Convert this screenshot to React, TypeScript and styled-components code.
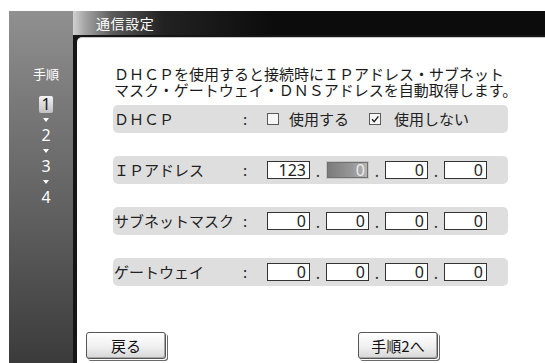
import React from 'react'
import styled, { createGlobalStyle } from 'styled-components'

const GlobalStyle = createGlobalStyle`
  html, body {
    margin: 0;
    padding: 0;
    background: #ffffff;
  }
  body {
    font-family: "Noto Sans CJK JP", "Noto Sans", sans-serif;
  }
`

const StyledScreen = styled.div`
  box-sizing: border-box;
  display: flex;
  height: 363px;
  padding: 11px 0 0 9px;
  overflow: hidden;
`

const StyledSidebar = styled.div`
  box-sizing: border-box;
  flex: 0 0 64px;
  display: flex;
  flex-direction: column;
  align-items: center;
  padding: 55px 0 0 10px;
  background: linear-gradient(#909090, #767676 30%, #5e5e5e 60%, #3b3b3b);
  color: #ffffff;
`

const StyledStepHead = styled.div`
  font-size: 13px;
  line-height: 16px;
  margin-bottom: 14px;
`

const StyledStepNum = styled.div<{ $active?: boolean }>`
  font-family: "Noto Sans", sans-serif;
  font-size: 16px;
  line-height: 17px;
  min-width: 14px;
  text-align: center;
  border-radius: 2px;
  color: ${(p) => (p.$active ? '#1a1a1a' : '#ffffff')};
  background: ${(p) =>
    p.$active ? 'linear-gradient(#f4f4f4, #c0c0c0)' : 'transparent'};
`

const StyledArrow = styled.div`
  width: 0;
  height: 0;
  margin: 5px 0;
  border-left: 3px solid transparent;
  border-right: 3px solid transparent;
  border-top: 4px solid #ffffff;
`

const StyledMain = styled.div`
  flex: 1;
  display: flex;
  flex-direction: column;
  background: #151515;
`

const StyledTitleBar = styled.div`
  height: 24px;
  display: flex;
  align-items: center;
  padding-left: 23px;
  color: #ffffff;
  font-size: 14px;
  letter-spacing: 0.6px;
  background: linear-gradient(
    to right,
    #d2d2d2 0,
    #a4a4a4 12px,
    #5a5a5a 40px,
    #222222 90px,
    #0c0c0c 200px
  );
`

const StyledPanel = styled.div`
  flex: 1;
  margin: 2px 0 0 4px;
  padding-top: 28px;
  background: #ffffff;
  border-top-left-radius: 5px;
  border-top: 1px solid #c8c8c8;
`

const StyledIntro = styled.div`
  padding: 0 0 0 37px;
  margin-bottom: 7px;
  font-size: 15px;
  line-height: 16px;
  white-space: nowrap;
  color: #1a1a1a;
`

const StyledRows = styled.div`
  display: flex;
  flex-direction: column;
  gap: 23px;
  margin: 0 37px 0 36px;
`

const StyledRow = styled.div`
  height: 28px;
  display: flex;
  align-items: center;
  padding-left: 1px;
  border-radius: 5px;
  background: #dedede;
  font-size: 15px;
  line-height: 16px;
  color: #222222;
`

const StyledLabel = styled.div`
  width: 124px;
  white-space: nowrap;
`

const StyledColon = styled.div`
  width: 14px;
  text-align: center;
`

const StyledControls = styled.div`
  display: flex;
  align-items: center;
  margin-left: 15px;
`

const StyledCheck = styled.div`
  box-sizing: border-box;
  width: 12px;
  height: 12px;
  border: 1px solid #5a5a5a;
  background: #f6f6f6;
  display: flex;
  align-items: center;
  justify-content: center;
`

const StyledCheckText = styled.div<{ $last?: boolean }>`
  margin: 0 ${(p) => (p.$last ? 0 : 20)}px 0 ${(p) => (p.$last ? 13 : 10)}px;
`

const StyledBox = styled.div<{ $focused?: boolean }>`
  box-sizing: border-box;
  width: 43px;
  height: 18px;
  padding-right: 3px;
  text-align: right;
  font-family: "Noto Sans", sans-serif;
  font-size: 16px;
  line-height: 16px;
  border: 1px solid ${(p) => (p.$focused ? '#c6c6c6' : '#333333')};
  color: ${(p) => (p.$focused ? '#ececec' : '#1e1e1e')};
  background: ${(p) =>
    p.$focused
      ? 'linear-gradient(to right, #7a7a7a, #979797 60%, #b6b6b6)'
      : '#ffffff'};
  box-shadow: ${(p) => (p.$focused ? 'inset 0 0 0 1px #707070' : 'none')};
`

const StyledDot = styled.div`
  width: 16px;
  text-align: center;
  font-family: "Noto Sans", sans-serif;
  font-size: 16px;
  line-height: 16px;
  align-self: flex-end;
  color: #333333;
`

const StyledFooter = styled.div`
  display: flex;
  gap: 192px;
  margin-top: 46px;
  padding-left: 9px;
`

const StyledButton = styled.div`
  box-sizing: border-box;
  width: 80px;
  height: 27px;
  display: flex;
  align-items: center;
  justify-content: center;
  font-size: 15px;
  line-height: 16px;
  color: #111111;
  border: 1px solid #555555;
  border-radius: 3px;
  background: linear-gradient(#ffffff, #f0f0f0 55%, #d6d6d6);
  box-shadow: inset -1px -1px 0 #a8a8a8, 1px 1px 0 #ffffff, 2px 2px 0 #6a6a6a;
`

type Octets = { values: string[]; focus?: number }

const AddressInput = ({ values, focus }: Octets) => (
  <StyledControls>
    {values.map((v, i) => (
      <React.Fragment key={i}>
        {i > 0 && <StyledDot>.</StyledDot>}
        <StyledBox $focused={focus === i}>{v}</StyledBox>
      </React.Fragment>
    ))}
  </StyledControls>
)

const CheckMark = () => (
  <svg width="10" height="10" viewBox="0 0 10 10">
    <path d="M2 5.2 L4.2 7.6 L8.4 2.4" fill="none" stroke="#1e1e1e" strokeWidth="1.4" />
  </svg>
)

const rows = [
  { label: 'ＩＰアドレス', values: ['123', '0', '0', '0'], focus: 1 },
  { label: 'サブネットマスク', values: ['0', '0', '0', '0'] },
  { label: 'ゲートウェイ', values: ['0', '0', '0', '0'] },
]

const App = () => (
  <>
    <GlobalStyle />
    <StyledScreen>
      <StyledSidebar>
        <StyledStepHead>手順</StyledStepHead>
        <StyledStepNum $active>1</StyledStepNum>
        <StyledArrow />
        <StyledStepNum>2</StyledStepNum>
        <StyledArrow />
        <StyledStepNum>3</StyledStepNum>
        <StyledArrow />
        <StyledStepNum>4</StyledStepNum>
      </StyledSidebar>
      <StyledMain>
        <StyledTitleBar>通信設定</StyledTitleBar>
        <StyledPanel>
          <StyledIntro>
            ＤＨＣＰを使用すると接続時にＩＰアドレス・サブネット
            <br />
            マスク・ゲートウェイ・ＤＮＳアドレスを自動取得します。
          </StyledIntro>
          <StyledRows>
            <StyledRow>
              <StyledLabel>ＤＨＣＰ</StyledLabel>
              <StyledColon>:</StyledColon>
              <StyledControls>
                <StyledCheck />
                <StyledCheckText>使用する</StyledCheckText>
                <StyledCheck>
                  <CheckMark />
                </StyledCheck>
                <StyledCheckText $last>使用しない</StyledCheckText>
              </StyledControls>
            </StyledRow>
            {rows.map((r) => (
              <StyledRow key={r.label}>
                <StyledLabel>{r.label}</StyledLabel>
                <StyledColon>:</StyledColon>
                <AddressInput values={r.values} focus={r.focus} />
              </StyledRow>
            ))}
          </StyledRows>
          <StyledFooter>
            <StyledButton>戻る</StyledButton>
            <StyledButton>手順2へ</StyledButton>
          </StyledFooter>
        </StyledPanel>
      </StyledMain>
    </StyledScreen>
  </>
)

export default App
